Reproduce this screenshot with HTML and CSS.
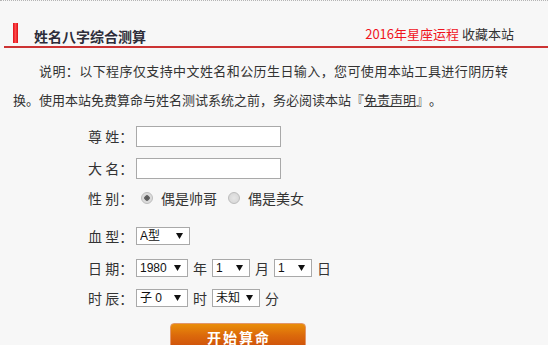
FILE: index.html
```html
<!DOCTYPE html>
<html lang="zh">
<head>
<meta charset="utf-8">
<title>姓名八字综合测算</title>
<link rel="stylesheet" href="styles.css">
</head>
<body>
<div class="page">
  <div class="head">
    <div class="title"><span class="mark"></span><span class="title-text">姓名八字综合测算</span></div>
    <div class="links"><a class="red" href="#">2016年星座运程</a> <a href="#">收藏本站</a></div>
  </div>
  <p class="intro">说明：以下程序仅支持中文姓名和公历生日输入，您可使用本站工具进行阴历转换。使用本站免费算命与姓名测试系统之前，务必阅读本站『<a href="#">免责声明</a>』。</p>
  <form class="form">
    <div class="row"><span class="lbl">尊 姓：</span><input class="txt" type="text"></div>
    <div class="row"><span class="lbl">大 名：</span><input class="txt" type="text"></div>
    <div class="row"><span class="lbl">性 别：</span>
      <label class="opt"><input class="radio" type="radio" name="sex" checked>偶是帅哥</label>
      <label class="opt"><input class="radio" type="radio" name="sex">偶是美女</label>
    </div>
    <div class="row"><span class="lbl">血 型：</span>
      <span class="sel w54"><select><option>A型</option><option>B型</option><option>O型</option><option>AB型</option></select></span>
    </div>
    <div class="row"><span class="lbl">日 期：</span>
      <span class="sel w52"><select><option>1980</option></select></span><span class="unit">年</span>
      <span class="sel w38"><select><option>1</option></select></span><span class="unit">月</span>
      <span class="sel w38"><select><option>1</option></select></span><span class="unit">日</span>
    </div>
    <div class="row"><span class="lbl">时 辰：</span>
      <span class="sel w52"><select><option>子 0</option></select></span><span class="unit">时</span>
      <span class="sel w48"><select><option>未知</option></select></span><span class="unit">分</span>
    </div>
    <div class="btn-row"><button class="btn" type="button">开始算命</button></div>
  </form>
</div>
</body>
</html>
```
FILE: styles.css
```css
html, body {
  margin: 0;
  padding: 0;
  background: #f7f7f7;
}
body {
  font-family: "Noto Sans CJK SC", "Liberation Sans", sans-serif;
  font-size: 14px;
  color: #333;
}
.page {
  width: 548px;
  height: 345px;
  overflow: hidden;
  border-top: 1px dotted #b4b4b4;
  box-sizing: border-box;
}
.head {
  margin: 0 0 0 4px;
  height: 45px;
  border-bottom: 2px solid #cc3333;
  display: flex;
  justify-content: space-between;
  align-items: flex-end;
}
.title {
  display: flex;
  align-items: flex-end;
  padding-bottom: 3px;
}
.mark {
  display: block;
  width: 5px;
  height: 20px;
  margin-left: 9px;
  background: linear-gradient(to right, #e0101a, #ff4a4a 50%, #d80d14);
}
.title-text {
  margin-left: 16px;
  font-size: 14px;
  font-weight: bold;
  color: #2d2d3a;
  line-height: 16px;
  position: relative;
  top: 1px;
}
.links {
  padding-right: 34px;
  padding-bottom: 4px;
  font-size: 13px;
  line-height: 16px;
}
.links a {
  color: #333;
  text-decoration: none;
}
.links a.red {
  color: #f0141e;
}
.intro {
  margin: 0;
  width: 495px;
  padding: 8px 0 0 13px;
  text-indent: 26px;
  text-align: justify;
  line-height: 29px;
  font-size: 13px;
  text-spacing-trim: space-all;
}
.intro a {
  color: #333;
  text-decoration: underline;
}
.form {
  display: flex;
  flex-direction: column;
}
.row {
  display: flex;
  align-items: center;
  height: 20px;
  padding-left: 88px;
  margin-top: 12px;
}
.row:nth-child(1) { margin-top: 12px; }
.row:nth-child(2) { margin-top: 12px; }
.row:nth-child(3) { margin-top: 10px; }
.row:nth-child(4) { margin-top: 18px; }
.row:nth-child(5) { margin-top: 12px; }
.row:nth-child(6) { margin-top: 10px; }
.lbl {
  width: 48px;
  white-space: pre;
}
.txt {
  box-sizing: border-box;
  width: 145px;
  height: 21px;
  margin: 0;
  border: 1px solid #a9a9a9;
  background: #fff;
  padding: 0 3px;
  outline: none;
}
.opt {
  display: flex;
  align-items: center;
  margin-right: 6px;
}
.radio {
  appearance: none;
  -webkit-appearance: none;
  box-sizing: border-box;
  width: 12px;
  height: 12px;
  margin: 0 8px 0 5px;
  border-radius: 50%;
  border: 1px solid #bcbcbc;
  background: radial-gradient(circle, #e6e6e6 0, #d4d4d4 100%);
}
.radio:checked {
  background: radial-gradient(circle, #555 0, #666 2.5px, #d8d8d8 3px, #e2e2e2 100%);
}
.sel {
  position: relative;
  display: inline-block;
  box-sizing: border-box;
  height: 18px;
  border: 1px solid #a9a9a9;
  background: #fff;
}
.sel select {
  appearance: none;
  -webkit-appearance: none;
  display: block;
  border: 0;
  margin: 0;
  background: transparent;
  width: 100%;
  height: 16px;
  padding: 0 0 0 3px;
  font-family: "Liberation Sans", "Noto Sans CJK SC", sans-serif;
  font-size: 12px;
  color: #111;
  outline: none;
}
.sel::after {
  content: "";
  position: absolute;
  right: 6px;
  top: 5px;
  width: 7px;
  height: 6px;
  background: #111;
  clip-path: polygon(0 0, 100% 0, 50% 100%);
  pointer-events: none;
}
.w54 { width: 54px; }
.w52 { width: 52px; }
.w48 { width: 48px; }
.w38 { width: 38px; }
.unit {
  margin: 0 5px;
}
.btn-row {
  padding-left: 170px;
  margin-top: 15px;
}
.btn {
  box-sizing: border-box;
  width: 136px;
  height: 30px;
  border: 1px solid #e3966a;
  border-radius: 4px;
  background: linear-gradient(to bottom, #e98e0a 0%, #dc6a0b 40%, #c9470c 100%);
  color: #fff;
  font-family: "Noto Sans CJK SC", sans-serif;
  font-weight: bold;
  font-size: 14px;
  letter-spacing: 2px;
  padding: 0 0 2px 2px;
  line-height: 24px;
}
```
